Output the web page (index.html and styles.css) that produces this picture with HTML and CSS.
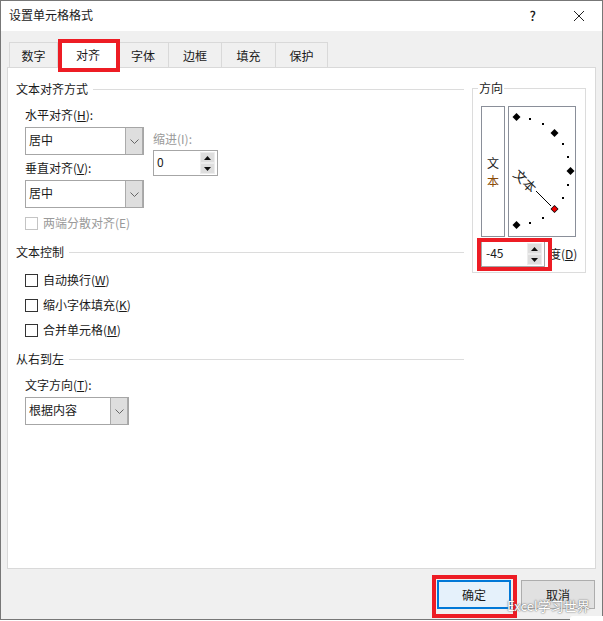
FILE: index.html
```html
<!DOCTYPE html>
<html lang="zh-CN">
<head>
  <meta charset="UTF-8" />
  <title>设置单元格格式</title>
  <link rel="stylesheet" href="styles.css">
</head>
<body>

<div class="dialog">
  <div class="titlebar">
    <span class="title">设置单元格格式</span>
    <span class="help">?</span>
    <svg class="close" width="12" height="12" viewBox="0 0 12 12"><path d="M1 1L11 11M11 1L1 11" stroke="#222" stroke-width="1" fill="none"/></svg>
  </div>

  <div class="tabs">
    <div class="tab tab-w49">数字</div>
    <div class="tab tab-w60 active">对齐</div>
    <div class="tab tab-w51">字体</div>
    <div class="tab tab-w53">边框</div>
    <div class="tab tab-w54">填充</div>
    <div class="tab tab-w52">保护</div>
  </div>

  <div class="panel">
    <div class="left">
      <div class="section"><span>文本对齐方式</span><i></i></div>
      <div class="indent">
        <div class="label l1">水平对齐(<u>H</u>):</div>
        <div class="combo-row">
          <div class="combo"><span>居中</span><b class="arrow"><svg width="9" height="5" viewBox="0 0 9 5"><path d="M0.500 0.500L4.500 4.500L8.500 0.500" stroke="#666" fill="none"/></svg></b></div>
          <div class="indent-field">
            <div class="label disabled">缩进(I):</div>
            <div class="spin spin-small">
              <span>0</span>
              <div class="spin-btns">
                <b><svg width="7" height="4" viewBox="0 0 7 4"><path d="M3.500 0L7 4H0Z" fill="#111"/></svg></b>
                <b><svg width="7" height="4" viewBox="0 0 7 4"><path d="M0 0H7L3.500 4Z" fill="#111"/></svg></b>
              </div>
            </div>
          </div>
        </div>
        <div class="label l2">垂直对齐(<u>V</u>):</div>
        <div class="combo"><span>居中</span><b class="arrow"><svg width="9" height="5" viewBox="0 0 9 5"><path d="M0.500 0.500L4.500 4.500L8.500 0.500" stroke="#666" fill="none"/></svg></b></div>
        <label class="check first disabled"><i></i><span>两端分散对齐(E)</span></label>
      </div>

      <div class="section s2"><span>文本控制</span><i></i></div>
      <div class="indent">
        <label class="check c1"><i></i><span>自动换行(<u>W</u>)</span></label>
        <label class="check"><i></i><span>缩小字体填充(<u>K</u>)</span></label>
        <label class="check"><i></i><span>合并单元格(<u>M</u>)</span></label>
      </div>

      <div class="section s3"><span>从右到左</span><i></i></div>
      <div class="indent">
        <div class="label l3">文字方向(<u>T</u>):</div>
        <div class="combo combo-narrow"><span>根据内容</span><b class="arrow"><svg width="9" height="5" viewBox="0 0 9 5"><path d="M0.500 0.500L4.500 4.500L8.500 0.500" stroke="#666" fill="none"/></svg></b></div>
      </div>
    </div>

    <div class="orient">
      <div class="orient-title">方向</div>
      <div class="orient-row">
        <div class="vtext"><span>文</span><span class="brown">本</span></div>
        <svg class="dial" width="69" height="131" viewBox="508 106 69 131">
          <rect x="508.500" y="106.500" width="67" height="130" fill="#fff" stroke="#8a8f99"/>
          <g fill="#000">
            <rect x="529" y="118" width="2" height="2"/>
            <rect x="542" y="123" width="2" height="2"/>
            <rect x="562" y="143" width="2" height="2"/>
            <rect x="567" y="156" width="2" height="2"/>
            <rect x="567" y="184" width="2" height="2"/>
            <rect x="562" y="197" width="2" height="2"/>
            <rect x="542" y="217" width="2" height="2"/>
            <rect x="529" y="222" width="2" height="2"/>
            <path d="M516.500 113l4 4-4 4-4-4z"/>
            <path d="M554.500 129l4 4-4 4-4-4z"/>
            <path d="M570.500 167l4 4-4 4-4-4z"/>
            <path d="M516.500 221l4 4-4 4-4-4z"/>
            <path d="M554.500 205l4 4-4 4-4-4z"/>
          </g>
          <path d="M554.500 206l3 3-3 3-3-3z" fill="#f00000"/>
          <path class="dial-line" d="M536 191L551 206" stroke="#000" fill="none"/>
          <text class="dial-text" transform="translate(525 181) rotate(45)" text-anchor="middle" y="5">文本</text>
        </svg>
      </div>
      <div class="degree-row">
        <div class="spin spin-degree">
          <span>-45</span>
          <div class="spin-btns">
            <b><svg width="7" height="4" viewBox="0 0 7 4"><path d="M3.500 0L7 4H0Z" fill="#111"/></svg></b>
            <b><svg width="7" height="4" viewBox="0 0 7 4"><path d="M0 0H7L3.500 4Z" fill="#111"/></svg></b>
          </div>
        </div>
        <span class="degree-label">度(<u>D</u>)</span>
      </div>
    </div>
  </div>

  <div class="footer">
    <button class="btn primary">确定</button>
    <button class="btn">取消</button>
  </div>

  <!-- red marks drawn over the dialog -->
  <div class="mark mark-tab"></div>
  <div class="mark mark-degree"></div>
  <div class="mark mark-ok"></div>
  <div class="watermark">Excel学习世界</div>
</div>
<div class="corner"></div>

</body>
</html>
```

FILE: styles.css
```css
* {
  box-sizing: border-box;
}
html, body {
  margin: 0;
  background: #fff;
}
body {
  font-family: "Noto Sans CJK SC", "Liberation Sans", sans-serif;
  font-size: 12px;
  line-height: 16px;
  color: #1a1a1a;
}
.dialog {
  position: relative;
  width: 603px;
  height: 620px;
  background: #f0f0f0;
  border: 1px solid #777;
  overflow: hidden;
  display: flex;
  flex-direction: column;
}
.titlebar {
  height: 30px;
  flex: none;
  background: #fff;
  display: flex;
  align-items: center;
  padding: 0 17px 0 8px;
}
.title {
  flex: 1;
  position: relative;
  top: -1px;
}
.help {
  font-size: 13px;
  margin-right: 37px;
  font-weight: 500;
}
.tabs {
  display: flex;
  height: 25px;
  margin: 11px 0 0 8px;
  flex: none;
}
.tab {
  height: 25px;
  border: 1px solid #d9d9d9;
  border-bottom: none;
  border-left: none;
  text-align: center;
  line-height: 26px;
  background: #f0f0f0;
}
.tab:first-child {
  border-left: 1px solid #d9d9d9;
}
.tab-w49 { width: 49px; }
.tab-w60 { width: 60px; }
.tab-w51 { width: 51px; }
.tab-w53 { width: 53px; }
.tab-w54 { width: 54px; }
.tab-w52 { width: 52px; }
.tab.active {
  background: #fff;
  height: 29px;
  margin-top: -3px;
  line-height: 31px;
  border: none;
  position: relative;
  z-index: 1;
}
.panel {
  flex: none;
  width: 589px;
  height: 502px;
  margin-left: 6px;
  background: #fff;
  border: 1px solid #d9d9d9;
  display: flex;
}
.left {
  width: 456px;
  padding: 13px 0 0 8px;
  flex: none;
}
.section {
  display: flex;
  align-items: center;
  height: 16px;
}
.section i {
  flex: 1;
  height: 1px;
  background: #dcdcdc;
  margin-left: 5px;
}
.s2 { margin-top: 13px; }
.s3 { margin-top: 13px; }
.indent {
  padding-left: 9px;
}
.label.l1 { margin-top: 10px; }
.label.l2 { margin-top: 5px; }
.label.l3 { margin-top: 10px; }
.label {
  height: 16px;
  margin-bottom: 4px;
}
.disabled {
  color: #9a9a9a;
}
.combo-row {
  display: flex;
  gap: 9px;
  height: 28px;
}
.indent-field {
  margin-top: 4px;
}
.indent-field .label {
  margin-bottom: 4px;
}
.combo {
  width: 119px;
  height: 28px;
  border: 1px solid #a6a6a6;
  background: #fff;
  display: flex;
  align-items: center;
  padding-left: 3px;
}
.combo span {
  flex: 1;
  padding-bottom: 2px;
}
.arrow {
  width: 18px;
  height: 26px;
  background: #dedede;
  border: 1px solid #ababab;
  border-width: 0 1px 0 1px;
  display: flex;
  align-items: center;
  justify-content: center;
}
.combo-narrow {
  width: 104px;
}
.spin {
  border: 1px solid #a6a6a6;
  background: #fff;
  display: flex;
  align-items: center;
  padding: 0 2px 0 3px;
}
.spin span {
  flex: 1;
  padding-bottom: 2px;
}
.spin-small {
  width: 65px;
  height: 26px;
  margin-top: -1px;
}
.spin-btns {
  display: flex;
  flex-direction: column;
}
.spin-btns b {
  width: 15px;
  height: 11px;
  background: #dedede;
  border: 1px solid #ededed;
  display: flex;
  align-items: center;
  justify-content: center;
}
.check {
  display: flex;
  align-items: center;
  height: 16px;
  gap: 5px;
}
.check i {
  width: 13px;
  height: 13px;
  background: #fff;
  border: 1px solid #333;
}
.check.disabled i {
  border-color: #c4c4c4;
}
.check.first {
  margin-top: 7px;
}
.check.c1 {
  margin-top: 12px;
}
.check + .check {
  margin-top: 9px;
}
.orient {
  position: relative;
  width: 114px;
  height: 185px;
  margin: 20px 0 0 8px;
  flex: none;
  border: 1px solid #dcdcdc;
  padding: 17px 0 0 8px;
}
.orient-title {
  position: absolute;
  top: -9px;
  left: 5px;
  padding: 0 1px;
  background: #fff;
}
.orient-row {
  display: flex;
  gap: 3px;
}
.vtext {
  width: 24px;
  height: 131px;
  border: 1px solid #8a8f99;
  display: flex;
  flex-direction: column;
  align-items: center;
  justify-content: center;
  line-height: 18px;
}
.brown {
  color: #8a4b08;
}
.dial {
  display: block;
}
.dial-line {
  shape-rendering: crispEdges;
}
.dial-text {
  font-family: "Noto Sans CJK SC", sans-serif;
  font-size: 13px;
  fill: #1a1a1a;
}
.degree-row {
  display: flex;
  align-items: center;
  margin-top: 4px;
}
.spin-degree {
  width: 64px;
  height: 26px;
}
.spin-degree span {
  padding-left: 1px;
}
.degree-label {
  margin-left: 4px;
}
.footer {
  flex: 1;
  display: flex;
  justify-content: flex-end;
  gap: 10px;
  padding: 11px 7px 0 0;
}
.btn {
  width: 74px;
  height: 29px;
  font: inherit;
  color: #1a1a1a;
  background: #e1e1e1;
  border: 1px solid #adadad;
  padding: 0;
}
.btn.primary {
  background: #e5f1fb;
  border: 2px solid #0078d7;
}
.mark {
  position: absolute;
  border: 4px solid #ed1c24;
  z-index: 2;
}
.mark-tab {
  left: 57px;
  top: 38px;
  width: 62px;
  height: 33px;
}
.mark-degree {
  left: 476px;
  top: 237px;
  width: 75px;
  height: 33px;
}
.mark-ok {
  left: 431px;
  top: 574px;
  width: 85px;
  height: 43px;
}
.watermark {
  position: absolute;
  left: 506px;
  top: 597px;
  font-size: 13px;
  color: #fff;
  text-shadow: 0 0 2px #6e6e6e, 0 0 1px #6e6e6e;
  z-index: 3;
}
.corner {
  position: absolute;
  left: 570px;
  top: 616px;
  width: 33px;
  height: 5px;
  background: #fff;
  border-radius: 3px 0 0 0;
}
```
